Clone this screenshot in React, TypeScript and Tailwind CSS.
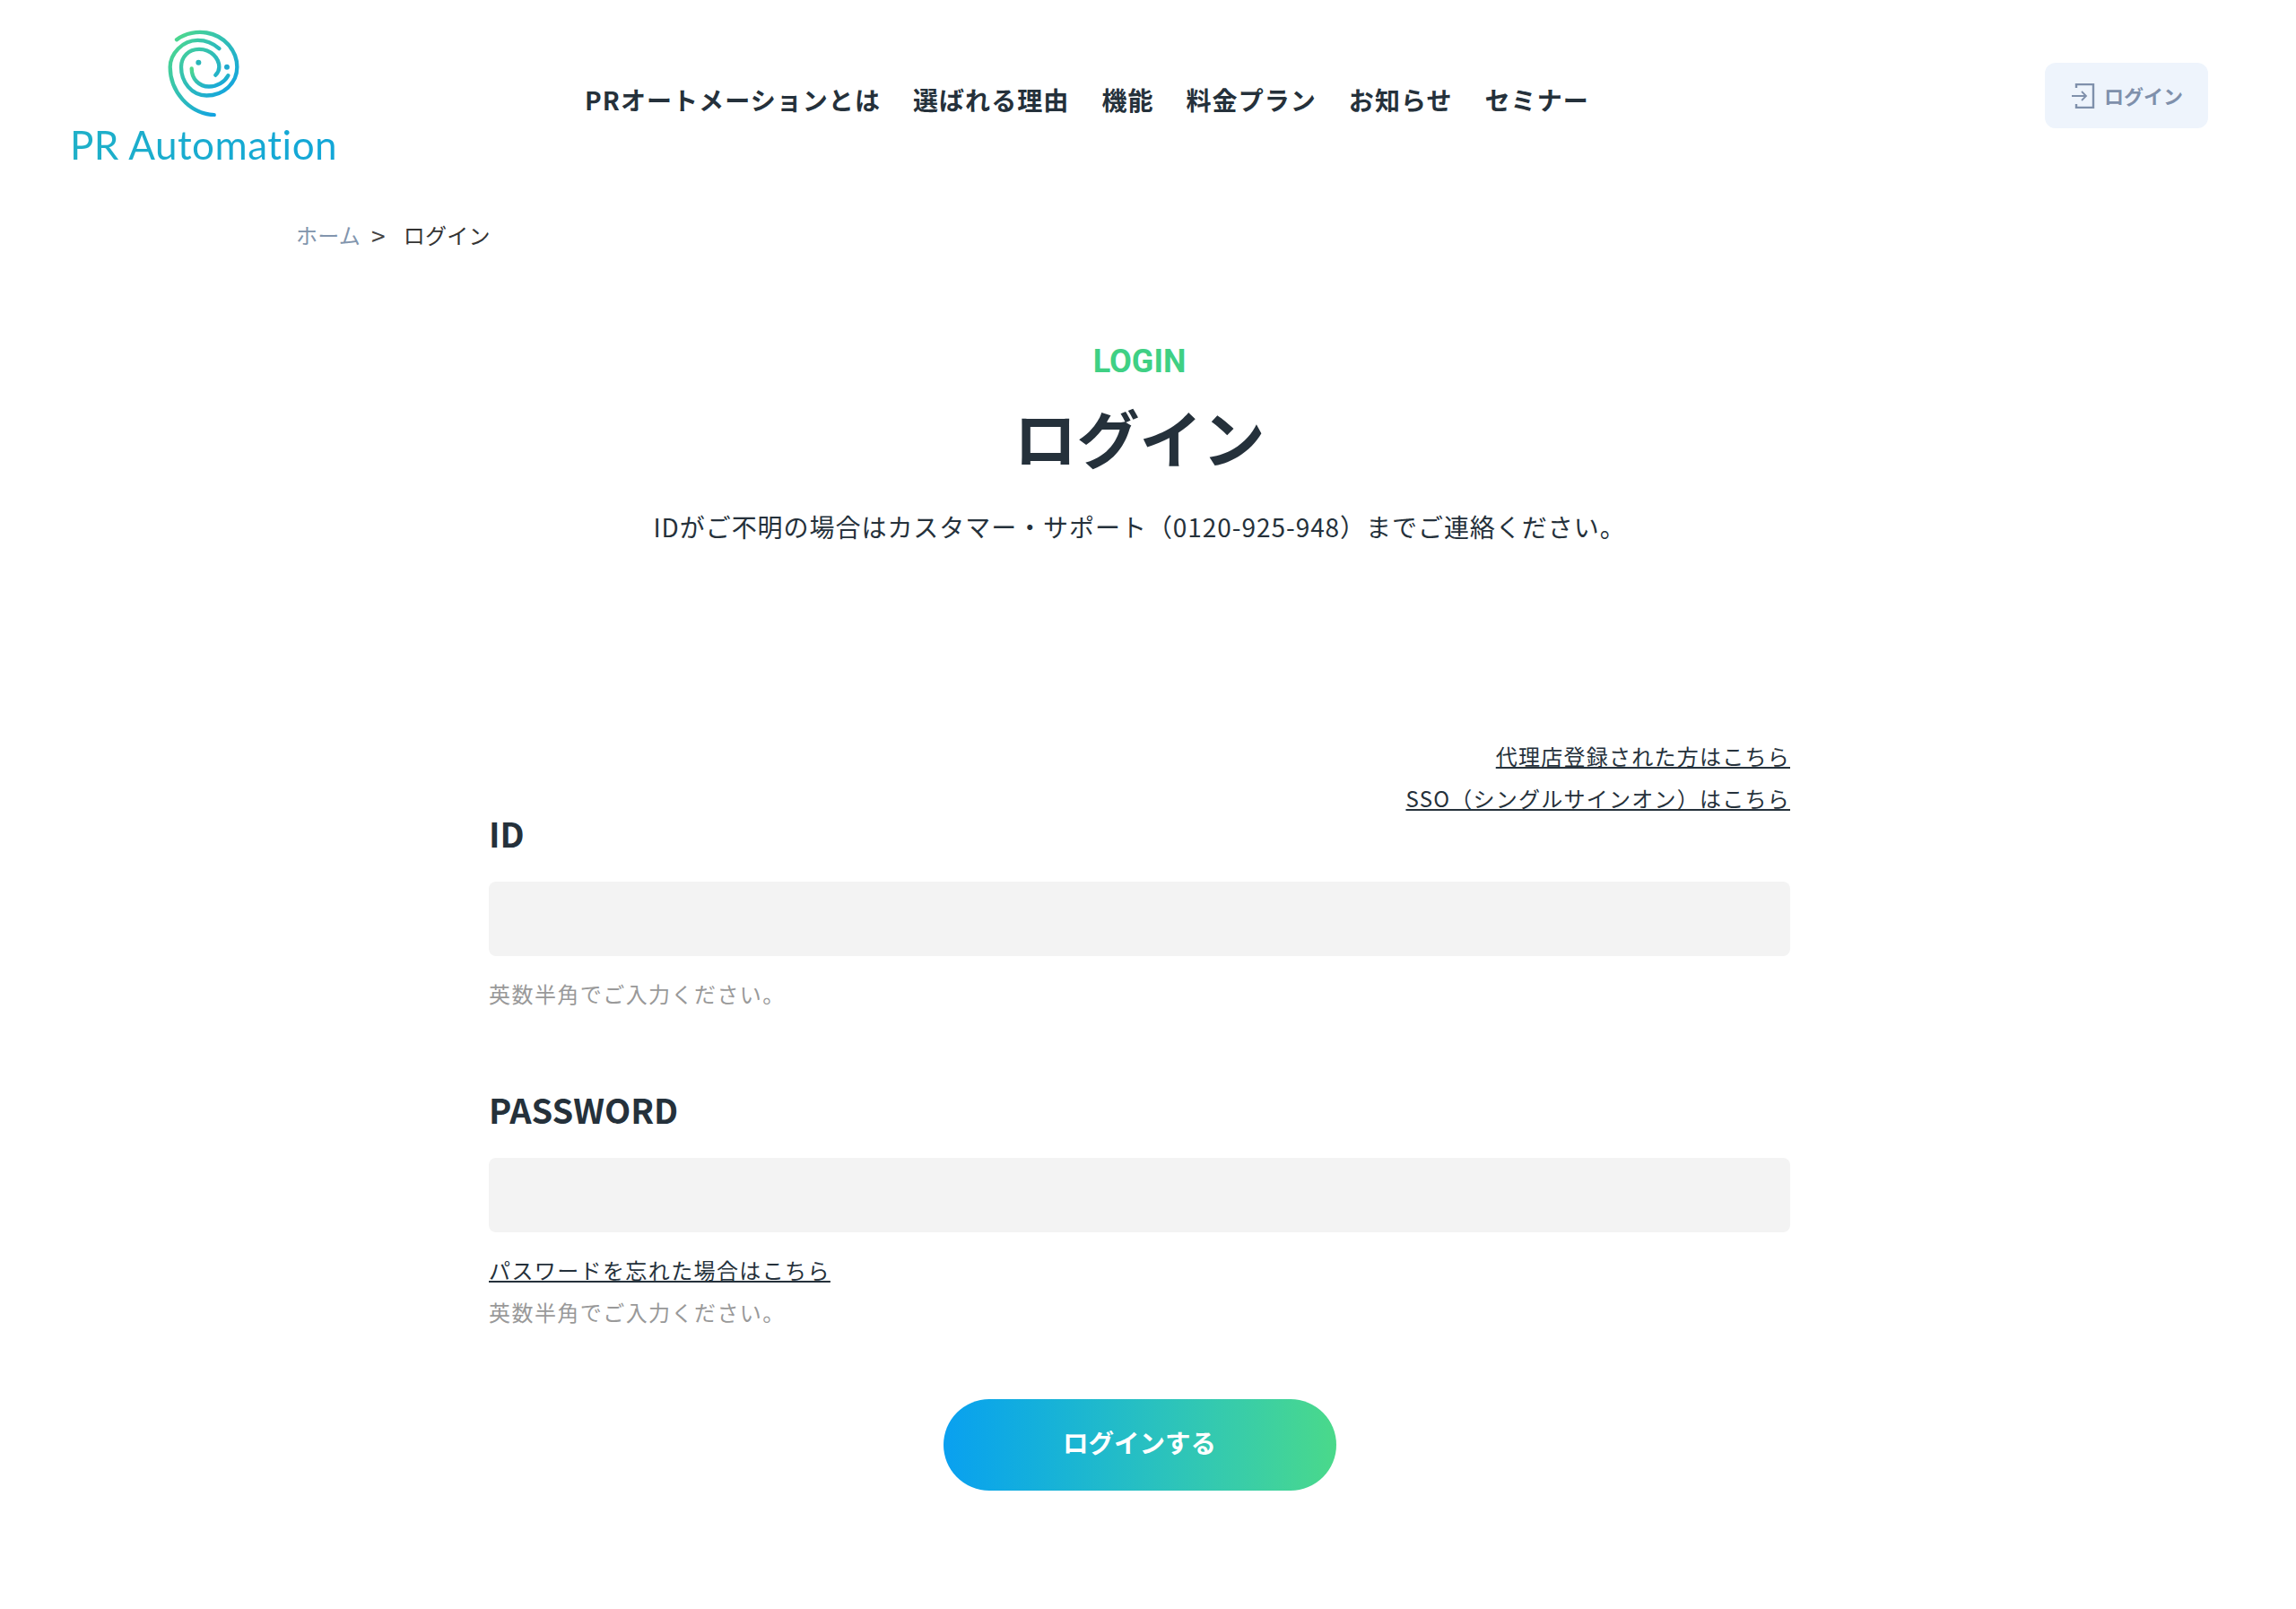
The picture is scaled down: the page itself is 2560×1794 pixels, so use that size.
import { useId } from 'react';

const navItems = ['PRオートメーションとは', '選ばれる理由', '機能', '料金プラン', 'お知らせ', 'セミナー'];

function Logo() {
  const gradientId = useId();

  return (
    <a href="#" className="flex w-[298px] flex-col items-center">
      <svg viewBox="440 65 240 290" className="h-[97px] w-[80px]" fill="none" strokeLinecap="round">
        <defs>
          <linearGradient id={gradientId} x1="0" y1="0" x2="1" y2="1">
            <stop offset="0" stopColor="#4fd98c" />
            <stop offset="1" stopColor="#0ea0e6" />
          </linearGradient>
        </defs>
        <g stroke={`url(#${gradientId})`} strokeWidth="13">
          <path d="M470 98C500 75 540 70 570 75C630 85 672 135 672 190C672 245 625 285 570 285C520 285 485 240 485 190C485 155 510 130 545 130C585 130 612 160 612 190C612 200 607 210 600 217" />
          <path d="M612 128C590 108 565 100 540 100C490 100 448 145 448 190C448 270 510 345 595 350" />
          <path d="M520 195C520 230 545 255 578 255C605 255 630 240 642 218" />
        </g>
        <circle cx="543" cy="175" r="9" fill="#27b5b8" />
        <circle cx="638" cy="190" r="9" fill="#1fa9cf" />
      </svg>
      <span className="mt-[9px] bg-gradient-to-r from-[#1fb0c8] to-[#12a6d8] bg-clip-text font-['Lato',sans-serif] text-[44px] leading-[44px] font-normal tracking-[0.5px] whitespace-nowrap text-transparent">
        PR Automation
      </span>
    </a>
  );
}

function Field({ label, name }: { label: string; name: string }) {
  return (
    <>
      <label htmlFor={name} className="block text-[38px] leading-[40px] font-bold">
        {label}
      </label>
      <input id={name} className="mt-[34px] block h-[83px] w-full rounded-[8px] bg-[#f3f3f3] px-5 outline-none" />
    </>
  );
}

export default function App() {
  return (
    <div className="w-[2541px] bg-white font-['Noto_Sans_CJK_JP',sans-serif] text-[#25313b]">
      <header className="flex h-[242px] items-start pt-[33px] pl-[78px]">
        <Logo />
        <nav className="mt-[56px] ml-[276px] flex gap-[36px] text-[28px] leading-[44px] font-bold tracking-[0.038em]">
          {navItems.map((item) => (
            <a key={item} href="#" className="whitespace-nowrap">
              {item}
            </a>
          ))}
        </nav>
        <button className="mt-[37px] ml-auto mr-[79px] flex h-[73px] w-[182px] items-center justify-center gap-[10px] rounded-[12px] bg-[#eef4fc] pl-[2px] text-[22px] font-bold text-[#7f90ab]">
          <svg viewBox="0 0 26 28" className="h-[28px] w-[26px]" fill="none" stroke="#7f90ab" strokeWidth="2.4">
            <path d="M5 5V1H24V27H5V23" />
            <path d="M0 14H16M11 9L16 14L11 19" strokeWidth="1.8" />
          </svg>
          ログイン
        </button>
      </header>

      <div className="flex h-[40px] items-center pl-[330px] text-[24px] leading-[40px] tracking-[0.01em]">
        <a href="#" className="text-[#8295ad]">
          ホーム
        </a>
        <span className="ml-[12px] text-[28px] text-[#444]">&gt;</span>
        <span className="ml-[20px] text-[#333]">ログイン</span>
      </div>

      <main className="flex flex-col items-center">
        <p className="mt-[96px] font-['Roboto',sans-serif] text-[36px] leading-[50px] font-bold text-[#3fd084]">LOGIN</p>
        <h1 className="mt-[14px] text-[70px] leading-[90px] font-bold">ログイン</h1>
        <p className="mt-[30px] text-[28px] leading-[50px] tracking-[0.034em]">
          IDがご不明の場合はカスタマー・サポート（0120-925-948）までご連絡ください。
        </p>

        <form className="mt-[212px] w-[1451px]">
          <div className="flex flex-col items-end gap-[9px] text-[24px] leading-[38px] tracking-[0.052em]">
            <a href="#" className="underline">
              代理店登録された方はこちら
            </a>
            <a href="#" className="underline">
              SSO（シングルサインオン）はこちら
            </a>
          </div>

          <div>
            <Field label="ID" name="id" />
            <p className="mt-[22px] text-[24px] leading-[40px] tracking-[0.06em] text-[#999]">英数半角でご入力ください。</p>
          </div>

          <div className="mt-[89px]">
            <Field label="PASSWORD" name="password" />
            <a href="#" className="mt-[23px] block w-fit text-[24px] leading-[38px] tracking-[0.058em] underline">
              パスワードを忘れた場合はこちら
            </a>
            <p className="mt-[8px] text-[24px] leading-[40px] tracking-[0.06em] text-[#999]">英数半角でご入力ください。</p>
          </div>

          <button
            type="button"
            className="mx-auto mt-[77px] block h-[102px] w-[438px] rounded-full bg-gradient-to-r from-[#0aa0f0] to-[#4ad98a] pb-[5px] text-[28.5px] font-bold text-white"
          >
            ログインする
          </button>
        </form>
      </main>
    </div>
  );
}
